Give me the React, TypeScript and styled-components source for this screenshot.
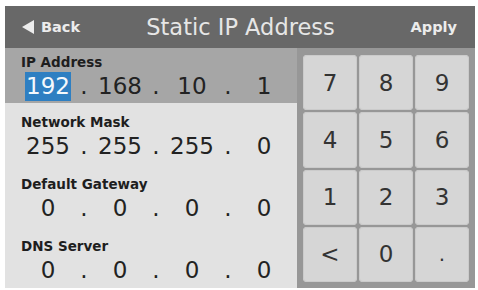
import React from "react";
import styled, { createGlobalStyle } from "styled-components";

const GlobalStyle = createGlobalStyle`
    html, body {
        margin: 0;
        padding: 0;
        background: #ffffff;
    }
    body {
        font-family: "DejaVu Sans", "Liberation Sans", sans-serif;
    }
`

type Field = {
    label: string;
    octets: string[];
    active?: boolean;
    selected?: number;
};

const fields: Field[] = [
    { label: "IP Address", octets: ["192", "168", "10", "1"], active: true, selected: 0 },
    { label: "Network Mask", octets: ["255", "255", "255", "0"] },
    { label: "Default Gateway", octets: ["0", "0", "0", "0"] },
    { label: "DNS Server", octets: ["0", "0", "0", "0"] },
];

const keys = ["7", "8", "9", "4", "5", "6", "1", "2", "3", "<", "0", "."];

export default function App() {
    return (
        <>
            <GlobalStyle />
            <Page>
                <Screen>
                    <Header>
                        <HeaderButton>
                            <BackArrow viewBox="0 0 13 14">
                                <path d="M12 0 L12 14 L0 7 Z" fill="#ececec" />
                            </BackArrow>
                            Back
                        </HeaderButton>
                        <Title>Static IP Address</Title>
                        <HeaderButton>Apply</HeaderButton>
                    </Header>
                    <Body>
                        <Fields>
                            {fields.map((f, i) => (
                                <FieldRow key={f.label} $active={f.active} $first={i === 0}>
                                    <Label>{f.label}</Label>
                                    <Octets>
                                        {f.octets.map((o, j) => (
                                            <React.Fragment key={j}>
                                                <Octet>
                                                    <OctetText $selected={f.selected === j}>{o}</OctetText>
                                                </Octet>
                                                {j < 3 && <Dot>.</Dot>}
                                            </React.Fragment>
                                        ))}
                                    </Octets>
                                </FieldRow>
                            ))}
                        </Fields>
                        <Keypad>
                            {keys.map((k) => (
                                <Key key={k} $small={k === "."}>{k}</Key>
                            ))}
                        </Keypad>
                    </Body>
                </Screen>
            </Page>
        </>
    );
}

const Page = styled.div`
    width: 478px;
    height: 290px;
    padding: 6px 3px 2px 5px;
    box-sizing: border-box;
`

const Screen = styled.div`
    display: flex;
    flex-direction: column;
    width: 470px;
    height: 282px;
    overflow: hidden;
`

const Header = styled.div`
    height: 42px;
    flex: none;
    background: #686868;
    display: flex;
    align-items: center;
    justify-content: space-between;
    padding: 0 18px 0 17px;
    box-sizing: border-box;
    color: #ececec;
`

const HeaderButton = styled.div`
    font-weight: bold;
    font-size: 14.5px;
    display: flex;
    align-items: center;
    width: 64px;
    &:last-child {
        justify-content: flex-end;
    }
`

const BackArrow = styled.svg`
    width: 13px;
    height: 14px;
    margin-right: 6px;
`

const Title = styled.div`
    font-size: 22.5px;
    color: #e6e6e6;
    margin-left: 2px;
`

const Body = styled.div`
    flex: 1;
    display: flex;
`

const Fields = styled.div`
    width: 292px;
    flex: none;
    display: flex;
    flex-direction: column;
    background: #e2e2e2;
`

const FieldRow = styled.div<{ $active?: boolean; $first?: boolean }>`
    height: ${(p) => (p.$first ? 55 : 62)}px;
    box-sizing: border-box;
    padding: ${(p) => (p.$first ? 6 : 11)}px 0 0 16px;
    background: ${(p) => (p.$active ? "#a6a6a6" : "transparent")};
    &:last-child {
        height: 61px;
    }
`

const Label = styled.div`
    font-weight: bold;
    font-size: 13.5px;
    line-height: 16px;
    color: #1e1e1e;
`

const Octets = styled.div`
    display: grid;
    grid-template-columns: 48px 24px 48px 24px 48px 24px 48px;
    margin: 2px 0 0 3px;
    font-size: 23px;
    line-height: 29px;
    color: #222;
`

const Octet = styled.div`
    text-align: center;
`

const OctetText = styled.span<{ $selected?: boolean }>`
    display: inline-block;
    padding: 0 1px;
    background: ${(p) => (p.$selected ? "#2e7fc2" : "transparent")};
    color: ${(p) => (p.$selected ? "#f4f8fc" : "inherit")};
`

const Dot = styled.div`
    text-align: center;
`

const Keypad = styled.div`
    flex: 1;
    background: #979797;
    padding: 7px 6px 6px 6px;
    display: grid;
    grid-template-columns: repeat(3, 1fr);
    grid-template-rows: repeat(4, 1fr);
    gap: 2px;
`

const Key = styled.div<{ $small?: boolean }>`
    background: #d6d6d6;
    border-radius: 4px;
    box-shadow: inset 0 0 0 1px #cbcbcb;
    display: flex;
    align-items: center;
    justify-content: center;
    font-size: ${(p) => (p.$small ? 20 : 23)}px;
    color: #333;
`
